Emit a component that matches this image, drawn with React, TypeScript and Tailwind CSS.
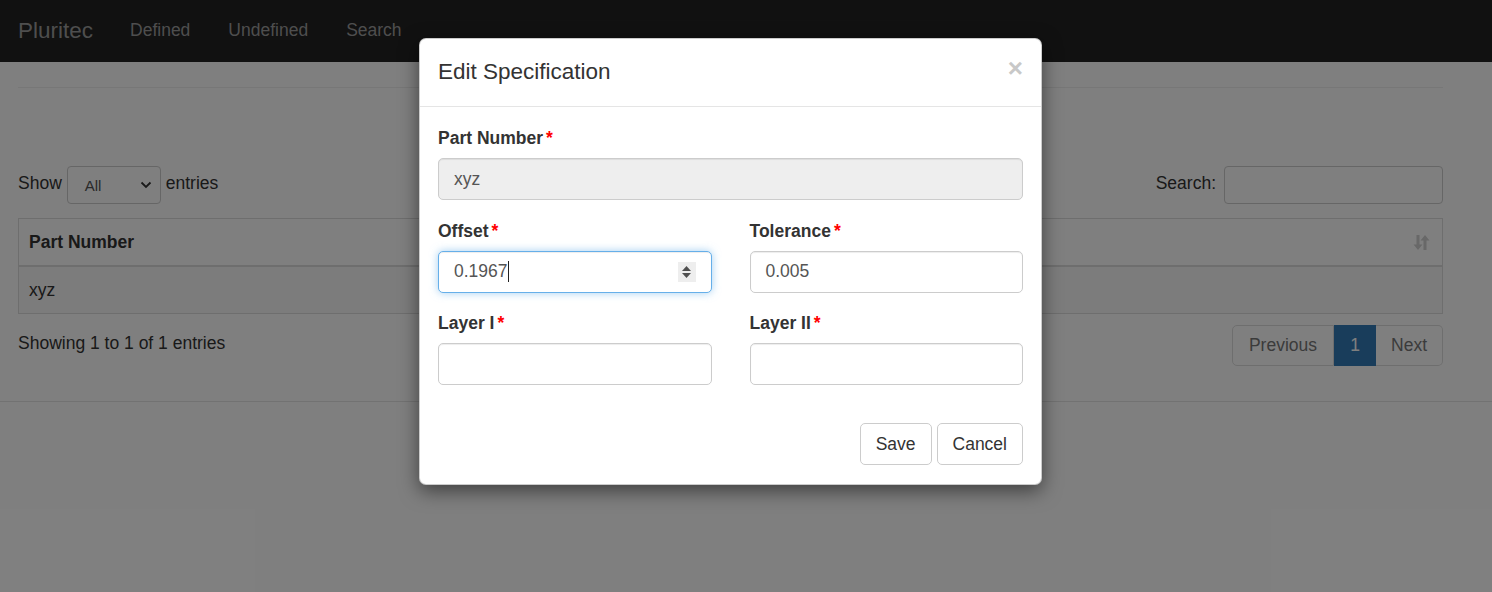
import { useState } from "react";

function Field({ label, value, disabled, focused }: { label: string; value?: string; disabled?: boolean; focused?: boolean }) {
    return (
        <div className="flex flex-col">
            <div className="h-[25px] leading-[25px] font-bold text-[#333] mb-[7px]">
                {label}
                <span className="text-[#ff0000] ml-[3px]">*</span>
            </div>
            <div
                className={
                    disabled
                        ? "h-[42px] flex items-center px-[15px] rounded-[5px] border border-[#ccc] bg-[#eee] text-[#555] shadow-[inset_0_1px_1px_rgba(0,0,0,0.075)]"
                        : focused
                            ? "h-[42px] flex items-center px-[15px] rounded-[5px] border border-[#66afe9] bg-white text-[#555] shadow-[inset_0_1px_1px_rgba(0,0,0,0.075),0_0_8px_rgba(102,175,233,0.6)]"
                            : "h-[42px] flex items-center px-[15px] rounded-[5px] border border-[#ccc] bg-white text-[#555] shadow-[inset_0_1px_1px_rgba(0,0,0,0.075)]"
                }
            >
                <span className="flex-1 flex items-center">
                    {value}
                    {focused && <span className="inline-block w-px h-[21px] bg-[#222]" />}
                </span>

                {/* Number spinner */}
                {focused && (
                    <span className="w-[18px] h-[20px] bg-[#eee] flex flex-col items-center justify-center gap-[2px]">
                        <svg width="9" height="5" viewBox="0 0 9 5"><path d="M4.5 0L9 5H0z" fill="#505050" /></svg>
                        <svg width="9" height="5" viewBox="0 0 9 5"><path d="M0 0h9L4.5 5z" fill="#505050" /></svg>
                    </span>
                )}
            </div>
        </div>
    );
}

export default function App() {
    const [offset] = useState("0.1967");

    return (
        <div className="relative min-h-[592px] bg-white text-[#333] text-[17.5px] font-['Liberation_Sans',Arial,sans-serif] overflow-hidden">

            {/* Navbar */}
            <nav className="h-[62px] bg-[#222] flex items-center px-[18px]">
                <span className="text-[22.5px] text-[#9d9d9d] mr-[37px] -mt-[1px]">Pluritec</span>
                <span className="text-[#9d9d9d] mr-[38px] -mt-[1px]">Defined</span>
                <span className="text-[#9d9d9d] mr-[38px] -mt-[1px]">Undefined</span>
                <span className="text-[#9d9d9d] -mt-[1px]">Search</span>
            </nav>

            <div className="pl-[18px] pr-[49px]">
                <hr className="mt-[25px] border-t border-[#eee]" />

                {/* Length + search */}
                <div className="mt-[78px] h-[38px] flex items-center justify-between">
                    <div className="flex items-center">
                        <span className="-mt-[3px]">Show</span>
                        <div className="ml-[5px] mr-[5px] w-[94px] h-[38px] rounded-[4px] border border-[#ccc] flex items-center justify-between pl-[17px] pr-[8px] text-[15px] text-[#555]">
                            <span className="mt-[2px]">All</span>
                            <svg width="12" height="8" viewBox="0 0 12 8"><path d="M1.5 1.5L6 6l4.5-4.5" stroke="#333" strokeWidth="1.8" fill="none" /></svg>
                        </div>
                        <span className="-mt-[3px]">entries</span>
                    </div>
                    <div className="flex items-center">
                        <span className="mr-[8px] -mt-[3px]">Search:</span>
                        <div className="w-[219px] h-[38px] rounded-[4px] border border-[#ccc]" />
                    </div>
                </div>

                {/* Table */}
                <table className="mt-[14px] w-full border-collapse">
                    <thead>
                        <tr>
                            <th className="text-left font-bold border border-[#ddd] border-b-2 px-[10px] h-[47px]">
                                <div className="flex items-center justify-between">
                                    <span>Part Number</span>
                                    <svg width="20" height="20" viewBox="0 0 20 20" className="mr-[1px]">
                                        <path d="M5.5 3h3v9.5h3l-4.5 5.5l-4.5-5.5h3z" fill="#d0d0d0" />
                                        <path d="M12.5 18h3V8.5h3L14 3l-4.5 5.5h3z" fill="#d0d0d0" />
                                    </svg>
                                </div>
                            </th>
                        </tr>
                    </thead>
                    <tbody>
                        <tr>
                            <td className="border border-[#ddd] px-[10px] h-[48px] bg-[#f9f9f9]">xyz</td>
                        </tr>
                    </tbody>
                </table>

                {/* Info + pagination */}
                <div className="mt-[11px] flex items-start justify-between">
                    <span className="mt-[5px]">Showing 1 to 1 of 1 entries</span>
                    <div className="flex h-[41px] text-[17.5px]">
                        <span className="px-[16px] flex items-center border border-[#ddd] rounded-l-[5px] text-[#777]">Previous</span>
                        <span className="w-[42px] flex items-center justify-center bg-[#337ab7] border border-[#337ab7] text-white">1</span>
                        <span className="px-[15px] flex items-center border border-[#ddd] border-l-0 rounded-r-[5px] text-[#777]">Next</span>
                    </div>
                </div>
            </div>

            <div className="mt-[35px] border-t border-[#e5e5e5]" />

            {/* Backdrop */}
            <div className="absolute inset-0 bg-black/50" />

            {/* Modal */}
            <div className="absolute left-[419px] top-[38px] w-[623px] bg-white rounded-[7px] shadow-[0_6px_19px_rgba(0,0,0,0.5)] border border-black/20">
                <div className="h-[68px] px-[18px] pb-[2px] flex items-center justify-between border-b border-[#e5e5e5]">
                    <span className="text-[22.5px] text-[#333]">Edit Specification</span>
                    <span className="text-[26px] font-bold text-[#c8c8c8] leading-none -mt-[8px]">×</span>
                </div>

                <div className="px-[18px] pt-[19px] pb-[19px] flex flex-col gap-[18.5px]">
                    <Field label="Part Number" value="xyz" disabled />
                    <div className="grid grid-cols-2 gap-x-[38px] gap-y-[18.5px]">
                        <Field label="Offset" value={offset} focused />
                        <Field label="Tolerance" value="0.005" />
                        <Field label="Layer I" />
                        <Field label="Layer II" />
                    </div>
                </div>

                <div className="px-[18px] pt-[19px] pb-[19px] flex justify-end gap-[5px]">
                    <button className="h-[42px] px-[15px] rounded-[5px] border border-[#ccc] bg-white text-[#333]">Save</button>
                    <button className="h-[42px] px-[15px] rounded-[5px] border border-[#ccc] bg-white text-[#333]">Cancel</button>
                </div>
            </div>
        </div>
    );
}
